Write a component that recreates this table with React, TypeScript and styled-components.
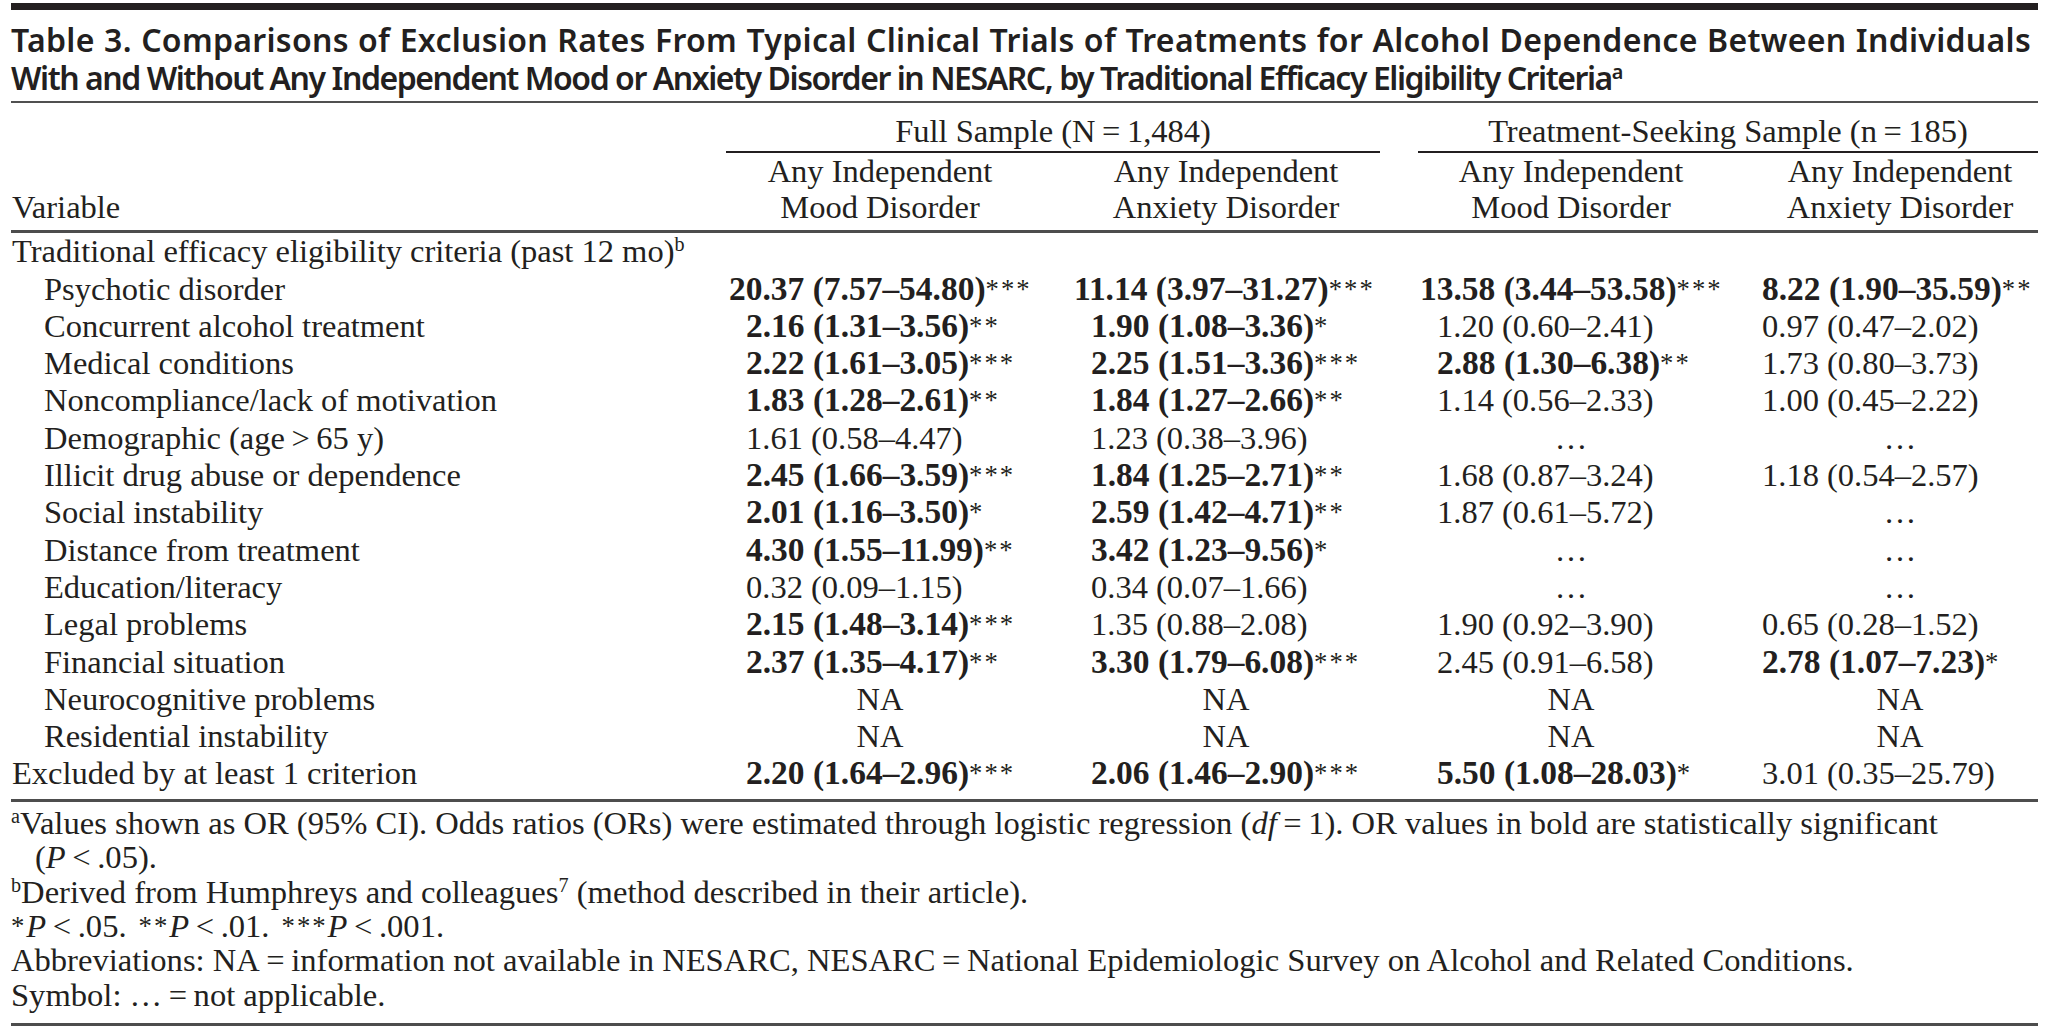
import styled, { createGlobalStyle } from 'styled-components';

const GlobalStyle = createGlobalStyle`
  body {
    margin: 0;
    background: #ffffff;
    color: #231f20;
    font-family: "Liberation Serif", "Times New Roman", serif;
  }
`;

const GRID = '699px 340px 352px 338px 298px';

// where the units digit of a single-digit value starts, and the column nudge
const COLS = [
  { start: 36, shift: 0 },
  { start: 41, shift: 0 },
  { start: 35, shift: 0 },
  { start: 0, shift: 22 },
];

const Page = styled.div`
  width: 2027px;
  margin-left: 11px;
  padding-top: 3px;
`;

const TopBar = styled.div`
  height: 7px;
  background: #231f20;
`;

const Title = styled.h1`
  margin: 0;
  padding: 11px 7px 4px 0;
  font-family: "Noto Sans", "DejaVu Sans Condensed", sans-serif;
  font-stretch: condensed;
  font-weight: 600;
  font-size: 32px;
  line-height: 38px;
  border-bottom: 2px solid #505050;
`;

const TitleLine = styled.span<{ $justify?: boolean }>`
  display: block;
  white-space: nowrap;
  letter-spacing: ${p => (p.$justify ? '0.3px' : '-1.45px')};
  text-align: ${p => (p.$justify ? 'justify' : 'left')};
  text-align-last: ${p => (p.$justify ? 'justify' : 'left')};
`;

const Sup = styled.sup`
  font-size: 0.62em;
  line-height: 0;
  vertical-align: 0.55em;
`;

const Table = styled.div`
  font-size: 32.5px;
  line-height: 37.3px;
`;

const GroupRow = styled.div`
  display: grid;
  grid-template-columns: ${GRID};
  padding-top: 10px;
`;

const GroupCell = styled.div<{ $col: string; $ml: number; $mr: number }>`
  grid-column: ${p => p.$col};
  margin: 0 ${p => p.$mr}px 0 ${p => p.$ml}px;
  text-align: center;
  padding-bottom: 1px;
  border-bottom: 2px solid #231f20;
`;

const HeadRow = styled.div`
  display: grid;
  grid-template-columns: ${GRID};
  align-items: end;
  line-height: 36px;
  padding-bottom: 5px;
  border-bottom: 3px solid #4d4d4d;
`;

const HeadCell = styled.div<{ $shift?: number }>`
  text-align: center;
  padding-left: ${p => p.$shift || 0}px;
`;

const VarHead = styled.div`
  padding-left: 1px;
`;

const Body = styled.div`
  padding-bottom: 6px;
  border-bottom: 3px solid #4d4d4d;
`;

const Row = styled.div`
  display: grid;
  grid-template-columns: ${GRID};
  white-space: nowrap;
`;

const Label = styled.div<{ $indent?: boolean }>`
  padding-left: ${p => (p.$indent ? 33 : 1)}px;
`;

const Cell = styled.div<{ $shift: number }>`
  text-align: center;
  padding-left: ${p => p.$shift}px;
`;

const Value = styled.span<{ $start: number; $wide: boolean }>`
  display: block;
  text-align: left;
  padding-left: ${p => p.$start - (p.$wide ? 17 : 0)}px;

  b {
    font-weight: 700;
    font-size: 1.03em;
    line-height: 0;
  }
`;

const Stars = styled.span`
  font-size: 0.82em;
  letter-spacing: 2px;
  line-height: 0;
  vertical-align: 0.08em;
`;

const Notes = styled.div`
  font-size: 32.6px;
  line-height: 34.4px;
  padding: 4px 0 11px;
  border-bottom: 3px solid #4d4d4d;
`;

const Note = styled.div<{ $hang?: boolean }>`
  padding-left: ${p => (p.$hang ? 24 : 0)}px;
  text-indent: ${p => (p.$hang ? -24 : 0)}px;
  white-space: nowrap;
`;

const Gap = styled.span`
  display: inline-block;
  width: 12px;
`;

type V = { v: string; s?: string; b?: boolean } | 'NA' | '…';

const bold = (v: string, s: string): V => ({ v, s, b: true });
const plain = (v: string): V => ({ v });

const ROWS: { label: string; indent: boolean; vals: V[] }[] = [
  {
    label: 'Psychotic disorder', indent: true,
    vals: [bold('20.37 (7.57–54.80)', '***'), bold('11.14 (3.97–31.27)', '***'), bold('13.58 (3.44–53.58)', '***'), bold('8.22 (1.90–35.59)', '**')],
  },
  {
    label: 'Concurrent alcohol treatment', indent: true,
    vals: [bold('2.16 (1.31–3.56)', '**'), bold('1.90 (1.08–3.36)', '*'), plain('1.20 (0.60–2.41)'), plain('0.97 (0.47–2.02)')],
  },
  {
    label: 'Medical conditions', indent: true,
    vals: [bold('2.22 (1.61–3.05)', '***'), bold('2.25 (1.51–3.36)', '***'), bold('2.88 (1.30–6.38)', '**'), plain('1.73 (0.80–3.73)')],
  },
  {
    label: 'Noncompliance/lack of motivation', indent: true,
    vals: [bold('1.83 (1.28–2.61)', '**'), bold('1.84 (1.27–2.66)', '**'), plain('1.14 (0.56–2.33)'), plain('1.00 (0.45–2.22)')],
  },
  {
    label: 'Demographic (age\u2009>\u200965 y)', indent: true,
    vals: [plain('1.61 (0.58–4.47)'), plain('1.23 (0.38–3.96)'), '…', '…'],
  },
  {
    label: 'Illicit drug abuse or dependence', indent: true,
    vals: [bold('2.45 (1.66–3.59)', '***'), bold('1.84 (1.25–2.71)', '**'), plain('1.68 (0.87–3.24)'), plain('1.18 (0.54–2.57)')],
  },
  {
    label: 'Social instability', indent: true,
    vals: [bold('2.01 (1.16–3.50)', '*'), bold('2.59 (1.42–4.71)', '**'), plain('1.87 (0.61–5.72)'), '…'],
  },
  {
    label: 'Distance from treatment', indent: true,
    vals: [bold('4.30 (1.55–11.99)', '**'), bold('3.42 (1.23–9.56)', '*'), '…', '…'],
  },
  {
    label: 'Education/literacy', indent: true,
    vals: [plain('0.32 (0.09–1.15)'), plain('0.34 (0.07–1.66)'), '…', '…'],
  },
  {
    label: 'Legal problems', indent: true,
    vals: [bold('2.15 (1.48–3.14)', '***'), plain('1.35 (0.88–2.08)'), plain('1.90 (0.92–3.90)'), plain('0.65 (0.28–1.52)')],
  },
  {
    label: 'Financial situation', indent: true,
    vals: [bold('2.37 (1.35–4.17)', '**'), bold('3.30 (1.79–6.08)', '***'), plain('2.45 (0.91–6.58)'), bold('2.78 (1.07–7.23)', '*')],
  },
  { label: 'Neurocognitive problems', indent: true, vals: ['NA', 'NA', 'NA', 'NA'] },
  { label: 'Residential instability', indent: true, vals: ['NA', 'NA', 'NA', 'NA'] },
  {
    label: 'Excluded by at least 1 criterion', indent: false,
    vals: [bold('2.20 (1.64–2.96)', '***'), bold('2.06 (1.46–2.90)', '***'), bold('5.50 (1.08–28.03)', '*'), plain('3.01 (0.35–25.79)')],
  },
];

const HEADS = [
  ['Any Independent', 'Mood Disorder'],
  ['Any Independent', 'Anxiety Disorder'],
  ['Any Independent', 'Mood Disorder'],
  ['Any Independent', 'Anxiety Disorder'],
];

function ValueCell({ val, col }: { val: V; col: number }) {
  const { start, shift } = COLS[col];
  if (typeof val === 'string') {
    return <Cell $shift={shift}>{val}</Cell>;
  }
  const wide = /^\d\d/.test(val.v);
  return (
    <Cell $shift={shift}>
      <Value $start={start} $wide={wide}>
        {val.b ? <b>{val.v}</b> : val.v}
        {val.s && <Stars>{val.s}</Stars>}
      </Value>
    </Cell>
  );
}

export default function App() {
  return (
    <>
      <GlobalStyle />
      <Page>
        <TopBar />
        <Title>
          <TitleLine $justify>
            Table 3. Comparisons of Exclusion Rates From Typical Clinical Trials of Treatments for Alcohol Dependence Between Individuals
          </TitleLine>
          <TitleLine>
            With and Without Any Independent Mood or Anxiety Disorder in NESARC, by Traditional Efficacy Eligibility Criteria<Sup>a</Sup>
          </TitleLine>
        </Title>

        <Table>
          <GroupRow>
            <GroupCell $col="2 / 4" $ml={16} $mr={22}>Full Sample (N{'\u2009'}={'\u2009'}1,484)</GroupCell>
            <GroupCell $col="4 / 6" $ml={16} $mr={0}>Treatment-Seeking Sample (n{'\u2009'}={'\u2009'}185)</GroupCell>
          </GroupRow>

          <HeadRow>
            <VarHead>Variable</VarHead>
            {HEADS.map((h, i) => (
              <HeadCell key={i} $shift={COLS[i].shift}>
                {h[0]}
                <br />
                {h[1]}
              </HeadCell>
            ))}
          </HeadRow>

          <Body>
            <Row>
              <Label>
                Traditional efficacy eligibility criteria (past 12 mo)<Sup>b</Sup>
              </Label>
            </Row>
            {ROWS.map((r, i) => (
              <Row key={i}>
                <Label $indent={r.indent}>{r.label}</Label>
                {r.vals.map((v, j) => (
                  <ValueCell key={j} val={v} col={j} />
                ))}
              </Row>
            ))}
          </Body>
        </Table>

        <Notes>
          <Note $hang>
            <Sup>a</Sup>Values shown as OR (95% CI). Odds ratios (ORs) were estimated through logistic regression (<i>df</i>{'\u2009'}={'\u2009'}1). OR values in bold are statistically significant
            <br />
            (<i>P</i>{'\u2009'}&lt;{'\u2009'}.05).
          </Note>
          <Note>
            <Sup>b</Sup>Derived from Humphreys and colleagues<Sup>7</Sup> (method described in their article).
          </Note>
          <Note>
            <Stars>*</Stars><i>P</i>{'\u2009'}&lt;{'\u2009'}.05.<Gap /><Stars>**</Stars><i>P</i>{'\u2009'}&lt;{'\u2009'}.01.<Gap /><Stars>***</Stars><i>P</i>{'\u2009'}&lt;{'\u2009'}.001.
          </Note>
          <Note>
            Abbreviations: NA{'\u2009'}={'\u2009'}information not available in NESARC, NESARC{'\u2009'}={'\u2009'}National Epidemiologic Survey on Alcohol and Related Conditions.
          </Note>
          <Note>Symbol: …{'\u2009'}={'\u2009'}not applicable.</Note>
        </Notes>
      </Page>
    </>
  );
}
